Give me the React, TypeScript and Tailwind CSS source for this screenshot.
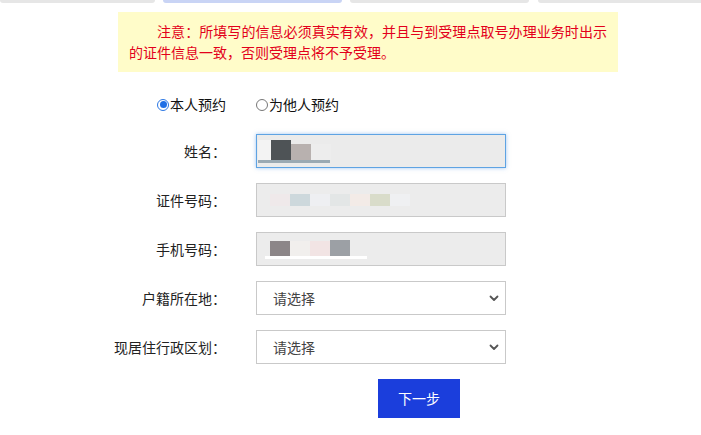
import React from "react";

type Blk = { w: number; h: number; c: string };

function Blur({ blocks, pl, under }: { blocks: Blk[]; pl: number; under?: { w: number; c: string; ml: number } }) {
  return (
    <div className="flex flex-col justify-center h-full" style={{ paddingLeft: pl }}>
      <div className="flex items-end blur-[0.6px]">
        {blocks.map((b, i) => (
          <div key={i} style={{ width: b.w, height: b.h, background: b.c }} />
        ))}
      </div>
      {under && <div className="h-[3px] blur-[0.6px]" style={{ width: under.w, background: under.c, marginLeft: under.ml }} />}
    </div>
  );
}

function Chevron() {
  return (
    <svg width="10" height="7" viewBox="0 0 10 7" className="text-[#555]">
      <path d="M1.5 1.5 L5 5 L8.5 1.5" fill="none" stroke="currentColor" strokeWidth="1.8" strokeLinecap="round" strokeLinejoin="round" />
    </svg>
  );
}

function Row({ label, children }: { label: string; children: React.ReactNode }) {
  return (
    <div className="flex items-center">
      <div className="w-[112px] text-right text-[14px] text-[#222] leading-none">{label}</div>
      <div className="ml-[30px] w-[250px] h-[34px]">{children}</div>
    </div>
  );
}

function SelectBox() {
  return (
    <div className="w-full h-full border border-[#c9c9c9] bg-white flex items-center justify-between pl-[16px] pr-[6px]">
      <span className="text-[14px] text-[#444]">请选择</span>
      <Chevron />
    </div>
  );
}

export default function App() {
  return (
    <div className="w-[701px] h-[435px] bg-white overflow-hidden" style={{ fontFamily: '"Noto Sans CJK SC", "Noto Sans", sans-serif' }}>
      <div className="flex h-[3px]">
        <div className="w-[155px] bg-[#e6e6e6] rounded-b-sm" />
        <div className="w-[8px]" />
        <div className="w-[179px] bg-[#c9d4f5] rounded-b-sm" />
        <div className="w-[8px]" />
        <div className="w-[179px] bg-[#e6e6e6] rounded-b-sm" />
        <div className="w-[9px]" />
        <div className="flex-1 bg-[#e6e6e6] rounded-bl-sm" />
      </div>

      <div className="ml-[118px] mt-[9px] w-[500px] h-[60px] bg-[#fffcc9] px-[11px] py-[9px]">
        <p className="text-[14px] leading-[21px] text-[#e3001b] indent-[28px] text-justify">
          注意：所填写的信息必须真实有效，并且与到受理点取号办理业务时出示的证件信息一致，否则受理点将不予受理。
        </p>
      </div>

      <div className="mt-[22px] h-[20px] flex items-center text-[14px] text-[#111] ml-[157px]">
        <div className="w-[99px] flex items-center">
          <div className="w-[12px] h-[12px] mt-[1px] rounded-full border border-[#2b77e4] bg-white flex items-center justify-center">
            <div className="w-[7px] h-[7px] rounded-full bg-[#1f6fe5]" />
          </div>
          <span className="ml-[1px]">本人预约</span>
        </div>
        <div className="flex items-center">
          <div className="w-[12px] h-[12px] mt-[1px] rounded-full border border-[#777] bg-white" />
          <span className="ml-[1px]">为他人预约</span>
        </div>
      </div>

      <div className="ml-[114px] mt-[20px] flex flex-col gap-[15px]">
        <Row label="姓名：">
          <div className="w-full h-full border border-[#5ea3e3] bg-[#ebebeb] shadow-[0_0_4px_rgba(80,150,230,0.55)]">
            <Blur
              pl={1}
              blocks={[
                { w: 13, h: 20, c: "#f3f3f3" },
                { w: 20, h: 20, c: "#4e5356" },
                { w: 20, h: 16, c: "#b8b1af" },
                { w: 20, h: 16, c: "#ededed" },
              ]}
              under={{ w: 72, c: "#9aa9b3", ml: 0 }}
            />
          </div>
        </Row>
        <Row label="证件号码：">
          <div className="w-full h-full border border-[#c9c9c9] bg-[#ececec]">
            <Blur
              pl={13}
              blocks={[
                { w: 20, h: 12, c: "#efe9ea" },
                { w: 20, h: 12, c: "#cdd8dc" },
                { w: 20, h: 12, c: "#eeeff2" },
                { w: 20, h: 12, c: "#e3e6e6" },
                { w: 20, h: 12, c: "#f3ebe7" },
                { w: 20, h: 12, c: "#d9dcca" },
                { w: 20, h: 12, c: "#eff0f2" },
              ]}
            />
          </div>
        </Row>
        <Row label="手机号码：">
          <div className="w-full h-full border border-[#c9c9c9] bg-[#ececec]">
            <Blur
              pl={13}
              blocks={[
                { w: 20, h: 15, c: "#8c8688" },
                { w: 20, h: 15, c: "#f1efed" },
                { w: 20, h: 15, c: "#f2e4e4" },
                { w: 20, h: 16, c: "#9ca0a5" },
              ]}
              under={{ w: 102, c: "#ffffff", ml: -5 }}
            />
          </div>
        </Row>
        <Row label="户籍所在地：">
          <SelectBox />
        </Row>
        <Row label="现居住行政区划：">
          <SelectBox />
        </Row>
        <div className="ml-[264px] w-[82px] h-[39px] bg-[#1b3edc] text-white text-[14px] flex items-center justify-center">
          下一步
        </div>
      </div>
    </div>
  );
}
